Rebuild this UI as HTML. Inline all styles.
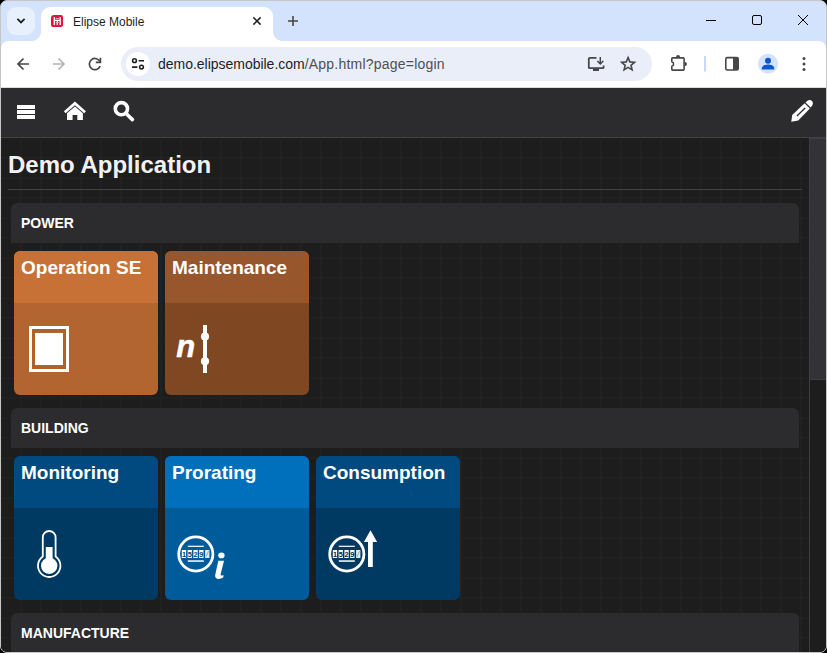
<!DOCTYPE html>
<html>
<head>
<meta charset="utf-8">
<style>
*{box-sizing:border-box;margin:0;padding:0}
html,body{width:827px;height:653px;overflow:hidden;background:#000;font-family:"Liberation Sans",sans-serif;}
#win{position:absolute;left:0;top:0;width:827px;height:653px;overflow:hidden;background:#d3e3fd;border-radius:7px;border:1px solid #c6c6c6;}
.abs{position:absolute}
#in{position:absolute;left:-1px;top:-1px;width:827px;height:653px;}
/* tab strip */
#tabsearch{left:7px;top:7px;width:28px;height:28px;border-radius:9px;background:#e8f0fd;}
#tab{left:41px;top:7px;width:232px;height:34px;background:#fff;border-radius:9px 9px 0 0;}
#tab:before,#tab:after{content:"";position:absolute;bottom:0;width:9px;height:9px;}
#tab:before{left:-9px;background:radial-gradient(circle at 0 0,transparent 8.5px,#fff 9px);}
#tab:after{right:-9px;background:radial-gradient(circle at 100% 0,transparent 8.5px,#fff 9px);}
#tabtitle{left:73px;top:15px;font-size:12px;color:#1f1f1f;white-space:nowrap;}
#fav{left:51px;top:15px;width:12px;height:12px;border-radius:3px 2px 2px 2px;background:#e1133f;}
#toolbar{left:1px;top:41px;width:825px;height:47px;background:#fff;border-radius:7px 7px 0 0;border-bottom:1px solid #dcdcdc;}
#omni{left:121px;top:47px;width:531px;height:34px;border-radius:17px;background:#e9eef9;}
#omnichip{left:126px;top:52px;width:24px;height:24px;border-radius:12px;background:#fff;}
#url{left:158px;top:56px;font-size:14px;color:#1f1f1f;white-space:nowrap;letter-spacing:0.12px}
#chromeicons{left:0;top:0;width:827px;height:88px;}
/* app */
#app{left:1px;top:88px;width:825px;height:565px;background:#1d1d1d;overflow:hidden;}
#appbar{left:0;top:0;width:825px;height:50px;background:#2c2c2e;border-bottom:1px solid #424242;}
#content{left:0;top:50px;width:808px;height:515px;background-color:#1d1d1d;
background-image:linear-gradient(to right,#212121 2px,transparent 2px),linear-gradient(to bottom,#202020 2px,transparent 2px);background-size:20px 20px;background-position:-1px -1px;}
#sb{left:808px;top:50px;width:17px;height:515px;background:#1d1d1d;border-left:1px solid #3d3d41;}
#sbthumb{left:808px;top:50px;width:17px;height:242px;background:#333337;border:1px solid #3f3f43;border-right:none;}
h1{position:absolute;left:7px;top:63px;font-size:24px;font-weight:bold;color:#f2f2f2;white-space:nowrap;}
#hr{left:7px;top:101px;width:794px;height:1px;background:#424242;}
.sec{position:absolute;left:10px;width:788px;height:40px;background:#2c2c2e;border-radius:6px 6px 0 0;color:#fff;font-weight:bold;font-size:14px;line-height:40px;padding-left:10px;}
.tile{position:absolute;width:144px;height:144px;border-radius:6px;overflow:hidden;}
.tile .top{position:absolute;left:0;top:0;width:100%;height:52px;}
.tile .lbl{position:absolute;left:7px;top:6px;font-size:19px;font-weight:bold;color:#fff;white-space:nowrap;}
#appicons{left:-1px;top:-88px;width:827px;height:653px;}
</style>
</head>
<body>
<div id="win"><div id="in">
  <div id="tabsearch" class="abs"></div>
  <div id="tab" class="abs"></div>
  <div id="fav" class="abs"></div>
  <div id="tabtitle" class="abs">Elipse Mobile</div>
  <div id="toolbar" class="abs"></div>
  <div id="omni" class="abs"></div>
  <div id="omnichip" class="abs"></div>
  <div id="url" class="abs"><span style="letter-spacing:-0.02px">demo.elipsemobile.com</span><span style="color:#505050;letter-spacing:0.22px">/App.html?page=login</span></div>
  <svg id="chromeicons" class="abs" viewBox="0 0 827 88" fill="none" stroke-linecap="round" stroke-linejoin="round">
    <!-- tab search chevron -->
    <path d="M17.4 18.8 L21 22.4 L24.6 18.8" stroke="#1f1f1f" stroke-width="1.8" stroke-linecap="butt" stroke-linejoin="miter"/>
    <!-- favicon glyph -->
    <path d="M54.3 17 V25 M60.2 17 V25 M54.3 20.4 H60.2 M57.25 20.4 V25" stroke="#fff" stroke-width="1.3" stroke-linecap="butt"/><path d="M55.6 18.6 H58.9 M55.6 22.6 H58.9" stroke="#f7a8b8" stroke-width="1" stroke-linecap="butt"/>
    <!-- tab close -->
    <path d="M253.4 17.4 L260.6 24.6 M260.6 17.4 L253.4 24.6" stroke="#1f1f1f" stroke-width="1.5" stroke-linecap="butt"/>
    <!-- new tab -->
    <path d="M288 21 H298 M293 16 V26" stroke="#444746" stroke-width="1.6" stroke-linecap="butt"/>
    <!-- window controls -->
    <path d="M706 20.5 H716" stroke="#000" stroke-width="1" stroke-linecap="butt"/>
    <rect x="752.5" y="15.5" width="9" height="9" rx="1.5" stroke="#000" stroke-width="1"/>
    <path d="M798 15 L808 25 M808 15 L798 25" stroke="#000" stroke-width="1" stroke-linecap="butt"/>
    <!-- back -->
    <path d="M29 64 H18 M23.5 58.5 L18 64 L23.5 69.5" stroke="#474747" stroke-width="1.7" stroke-linecap="butt" stroke-linejoin="miter"/>
    <!-- forward -->
    <path d="M53 64 H64 M58.5 58.5 L64 64 L58.5 69.5" stroke="#b4b4b4" stroke-width="1.7" stroke-linecap="butt" stroke-linejoin="miter"/>
    <!-- reload -->
    <path d="M100.2 62.2 A5.6 5.6 0 1 0 100.2 66" stroke="#474747" stroke-width="1.7" stroke-linecap="butt"/>
    <path d="M100.4 57.8 V62.4 H95.8" stroke="#474747" stroke-width="1.7" stroke-linecap="butt" stroke-linejoin="miter"/>
    <!-- tune -->
    <circle cx="134.5" cy="60.7" r="1.9" stroke="#1f1f1f" stroke-width="1.5"/>
    <path d="M138.6 60.7 H144" stroke="#1f1f1f" stroke-width="1.6" stroke-linecap="butt"/>
    <circle cx="141.5" cy="67.1" r="1.9" stroke="#1f1f1f" stroke-width="1.5"/>
    <path d="M132 67.1 H137.4" stroke="#1f1f1f" stroke-width="1.6" stroke-linecap="butt"/>
    <!-- install -->
    <path d="M596.5 57.8 H589.8 Q588.8 57.8 588.8 58.8 V67.2 Q588.8 68.2 589.8 68.2 H602.6 Q603.6 68.2 603.6 67.2 V65.4" stroke="#474747" stroke-width="1.8" stroke-linecap="butt"/>
    <path d="M593 70 H599" stroke="#474747" stroke-width="2.2" stroke-linecap="butt"/>
    <path d="M600.3 57 V63.6 M597.3 61 L600.3 64 L603.3 61" stroke="#474747" stroke-width="1.5" stroke-linecap="butt" stroke-linejoin="miter"/>
    <!-- star -->
    <path d="M628.1 57.6 L629.9 61.9 L634.5 62.3 L631 65.3 L632.1 69.9 L628.1 67.4 L624.1 69.9 L625.2 65.3 L621.7 62.3 L626.3 61.9 Z" stroke="#474747" stroke-width="1.6" stroke-linejoin="miter"/>
    <!-- extensions -->
    <path d="M671.8 61.8 V58.7 Q671.8 57.9 672.6 57.9 H683.3 Q684.1 57.9 684.1 58.7 V69.3 Q684.1 70.1 683.3 70.1 H672.6 Q671.8 70.1 671.8 69.3 V66.2 A2.25 2.25 0 0 0 671.8 61.8 Z" stroke="#474747" stroke-width="1.6" stroke-linejoin="round"/>
    <path d="M676 58 V57.3 A2.05 2.2 0 0 1 680.1 57.3 V58 Z" fill="#474747" stroke="none"/>
    <path d="M684.5 62.1 H685 A1.95 1.95 0 0 1 685 66 H684.5 Z" fill="#474747" stroke="none"/>
    <!-- separator -->
    <path d="M705 56 V71.5" stroke="#c7d9fb" stroke-width="2" stroke-linecap="butt"/>
    <!-- side panel -->
    <rect x="725.8" y="57.6" width="12.4" height="12.4" rx="1.6" stroke="#474747" stroke-width="1.6"/>
    <rect x="733" y="57.6" width="5.2" height="12.4" fill="#474747" stroke="none"/>
    <!-- profile -->
    <circle cx="768" cy="63.7" r="10" fill="#d3e3fd" stroke="none"/>
    <circle cx="768" cy="60.8" r="3" fill="#0b57d0" stroke="none"/>
    <path d="M761.8 69.6 V68.4 C761.8 65.6 765.6 64.6 768 64.6 C770.4 64.6 774.2 65.6 774.2 68.4 V69.6 Z" fill="#0b57d0" stroke="none"/>
    <!-- kebab -->
    <circle cx="804" cy="58.5" r="1.5" fill="#474747" stroke="none"/>
    <circle cx="804" cy="64" r="1.5" fill="#474747" stroke="none"/>
    <circle cx="804" cy="69.4" r="1.5" fill="#474747" stroke="none"/>
  </svg>

  <div id="app" class="abs">
    <div id="content" class="abs"></div>
    <div id="sb" class="abs"></div>
    <div id="sbthumb" class="abs"></div>
    <div id="appbar" class="abs"></div>
    <h1>Demo Application</h1>
    <div id="hr" class="abs"></div>

    <div class="sec" style="top:115px">POWER</div>
    <div class="tile" style="left:13px;top:163px;background:#b26530"><div class="top" style="background:#c87137"></div><div class="lbl">Operation SE</div></div>
    <div class="tile" style="left:164px;top:163px;background:#804822"><div class="top" style="background:#97562c"></div><div class="lbl">Maintenance</div></div>

    <div class="sec" style="top:320px">BUILDING</div>
    <div class="tile" style="left:13px;top:368px;background:#003a63"><div class="top" style="background:#004a7f"></div><div class="lbl">Monitoring</div></div>
    <div class="tile" style="left:164px;top:368px;background:#005b9a"><div class="top" style="background:#0070bd"></div><div class="lbl">Prorating</div></div>
    <div class="tile" style="left:315px;top:368px;background:#003a63"><div class="top" style="background:#004a7f"></div><div class="lbl">Consumption</div></div>

    <div class="sec" style="top:525px">MANUFACTURE</div>

    <!-- all app icons drawn in page coordinates -->
    <svg id="appicons" class="abs" viewBox="0 0 827 653" fill="none">
      <!-- hamburger -->
      <rect x="17" y="105" width="18" height="4" fill="#fff"/>
      <rect x="17" y="110" width="18" height="4" fill="#fff"/>
      <rect x="17" y="115" width="18" height="4" fill="#fff"/>
      <!-- home -->
      <path d="M74.9 101.5 L85.9 111.2 L84.2 113.2 L74.9 105.2 L65.6 113.2 L63.9 111.2 Z" fill="#fff"/>
      <path d="M74.9 106.4 L82.9 113.2 V120 H77.3 V115 H72.6 V120 H67 V113.2 Z" fill="#fff"/>
      <!-- search -->
      <circle cx="121.4" cy="108.7" r="6.1" stroke="#fff" stroke-width="3.6"/>
      <path d="M126.6 114 L132.4 119.6" stroke="#fff" stroke-width="3.6" stroke-linecap="round"/>
      <!-- pencil -->
      <path d="M791.3 121.8 L792.2 115 L804.6 103.3 L809.9 108.6 L798.2 120.4 Z" fill="#fff"/>
      <path d="M805.5 102.4 L807.2 100.9 C809 99.4 811 100 812 101 C813 102 813.4 104 812.2 105.6 L810.8 107.6 Z" fill="#fff"/>
      <path d="M796.9 116 L805.2 108" stroke="#2c2c2e" stroke-width="1.3"/>

      <!-- Operation SE icon -->
      <rect x="30.5" y="327.5" width="37" height="43" stroke="#fff" stroke-width="3"/>
      <rect x="33.5" y="330.5" width="31" height="37" stroke="#b06029" stroke-width="3"/>
      <rect x="35" y="333" width="28" height="32" fill="#fff"/>
      <!-- Maintenance icon -->
      <text x="176.3" y="357.2" font-family="Liberation Sans, sans-serif" font-weight="bold" font-style="italic" font-size="31" fill="#fff" stroke="#fff" stroke-width="0.5">n</text>
      <rect x="203" y="325" width="4" height="48" fill="#fff"/>
      <circle cx="205" cy="336.6" r="4.1" fill="#fff"/>
      <circle cx="205" cy="361.3" r="4.1" fill="#fff"/>
      <!-- Monitoring thermometer -->
      <path d="M42.8 556.6 V537.4 A6.4 6.4 0 0 1 55.6 537.4 V556.6 A11.2 11.2 0 1 1 42.8 556.6 Z" stroke="#fff" stroke-width="1.8"/>
      <circle cx="49.2" cy="565.8" r="8.2" fill="#fff"/>
      <rect x="45.8" y="547" width="6.8" height="14" fill="#fff"/>
      <!-- meters -->
      <g id="meter">
        <circle cx="195.8" cy="554" r="17.1" stroke="#fff" stroke-width="2.8"/>
        <rect x="187.8" y="545.7" width="16" height="1.2" fill="#fff"/>
        <rect x="187.8" y="560.3" width="16" height="1.5" fill="#fff"/>
        <rect x="181.8" y="550" width="4.3" height="8" fill="#fff"/>
        <rect x="187.6" y="550" width="4.3" height="8" fill="#fff"/>
        <rect x="193.4" y="550" width="4.3" height="8" fill="#fff"/>
        <rect x="199.2" y="550" width="4.3" height="8" fill="#fff"/>
        <rect x="205.1" y="550" width="4.3" height="8" fill="#e4e9ee"/><path d="M206 556.8 L208.6 551.2" stroke="#8fa3b5" stroke-width="0.9"/>
      </g>
      <use href="#meter" x="151"/>
      <g font-family="Liberation Sans, sans-serif" font-weight="bold" font-size="7.4" text-anchor="middle">
        <text x="183.95" y="556.7" fill="#003f6e">1</text><text x="189.75" y="556.7" fill="#003f6e">5</text><text x="195.55" y="556.7" fill="#003f6e">2</text><text x="201.35" y="556.7" fill="#003f6e">9</text>
        <text x="334.95" y="556.7" fill="#002644">1</text><text x="340.75" y="556.7" fill="#002644">5</text><text x="346.55" y="556.7" fill="#002644">2</text><text x="352.35" y="556.7" fill="#002644">9</text>
      </g>
      <!-- i -->
      <ellipse cx="221.4" cy="555.4" rx="3.2" ry="2.8" fill="#fff"/><path d="M218.3 560.8 H224 L220.7 574 Q220.3 575.8 221.8 575.6 L223.6 575.2 L223.2 577.6 Q220.6 579 218.2 578.9 Q214.4 578.6 215.3 574.6 Z" fill="#fff"/>
      <!-- up arrow -->
      <path d="M370.5 530.2 L377.1 542 H372.8 V567 H368 V542 H363.9 Z" fill="#fff"/>
    </svg>
  </div>
</div></div>
</body>
</html>
